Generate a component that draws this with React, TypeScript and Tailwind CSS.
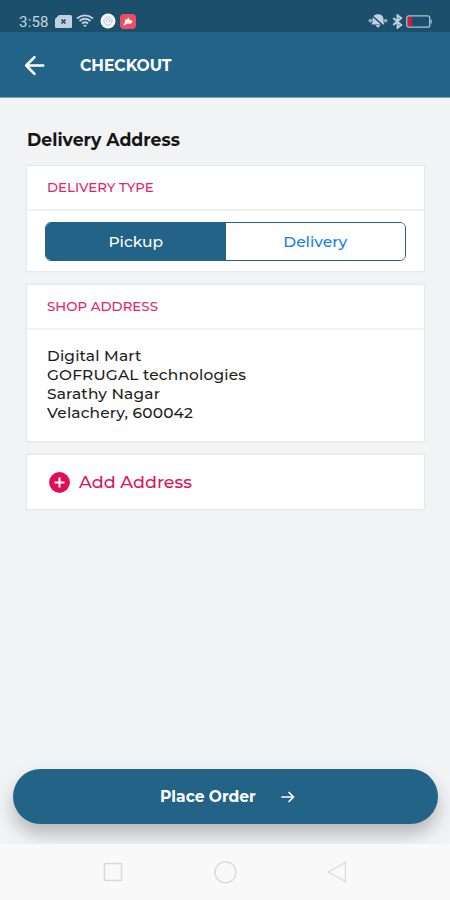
import { useState, type ReactElement, type ReactNode } from 'react';

type DeliveryType = 'pickup' | 'delivery';

const SHOP_ADDRESS = ['Digital Mart', 'GOFRUGAL technologies', 'Sarathy Nagar', 'Velachery, 600042'];

function StatusBar(): ReactElement {
  return (
    <div className="flex h-8 shrink-0 items-center justify-between bg-[#1b4f6c] pt-[10px] pr-[18px] pl-[19px] text-[#c3d6e2]">
      <div className="flex items-center">
        <span className="w-[36px] pt-px font-[Roboto] text-[15px] leading-[20px] tracking-[0.2px] whitespace-nowrap">3:58</span>
        <svg width="17" height="13" viewBox="0 0 17 13">
          <path d="M4 0h11.5Q17 0 17 1.500v10Q17 13 15.500 13h-14Q0 13 0 11.500V4z" fill="#bfd2de" />
          <path d="M6.500 4.500l4 4M10.500 4.500l-4 4" stroke="#1b4f6c" strokeWidth="1.700" />
        </svg>
        <svg width="18" height="14" viewBox="0 0 18 14" className="ml-[4px]" fill="none" stroke="#bfd2de" strokeWidth="1.700">
          <path d="M1 4.500Q9-1.800 17 4.500M3.500 7Q9 2.500 14.500 7M6 9.500q3-2.500 6 0" />
          <path d="M7.500 11.200h3L9 13z" fill="#bfd2de" strokeWidth="0.500" />
        </svg>
        <svg width="16" height="16" viewBox="0 0 16 16" className="ml-[6px]">
          <circle cx="8" cy="8" r="7.500" fill="#f3f7fc" />
          <circle cx="8" cy="8" r="4" fill="none" stroke="#9fb0cf" strokeDasharray="2 1.200" />
          <path d="M6.500 9.500v-2a1.500 1.500 0 0 1 3 0v2" fill="none" stroke="#b3bfdc" />
        </svg>
        <svg width="16" height="15" viewBox="0 0 16 15" className="ml-[4px]">
          <rect width="16" height="15" rx="4" fill="#f14c62" />
          <path d="M3 12l2.200-4.200L4.800 5.500l2.400.3L8 3.300l2 2.600 2.900 1.400-1.900 2.500-3.300-.3z" fill="#fff" />
        </svg>
      </div>
      <div className="flex items-center">
        <svg width="20" height="16" viewBox="0 0 20 16">
          <path d="M10 1.200c3.500 0 5.500 2.300 5.500 5v3l1 2.300h-13l1-2.300v-3c0-2.700 2-5 5.500-5zM7.500 12h5L10 15z" fill="#bfd2de" />
          <path d="M0.500 7.700h3.500M16 7.700h3.500M2.500 6v3.500M17.500 6v3.500" stroke="#9cb7c7" strokeWidth="1.700" />
          <path d="M5 3.500l9.500 8.500" stroke="#1b4f6c" strokeWidth="1.500" />
        </svg>
        <svg width="11" height="15" viewBox="0 0 11 15" className="ml-[4px]" fill="none" stroke="#bfd2de" strokeWidth="1.900">
          <path d="M1.200 4l8 7-3.700 2.800V1.200L9.200 4l-8 7" />
        </svg>
        <svg width="26" height="13" viewBox="0 0 26 13" className="ml-[3px]">
          <rect x="0.800" y="0.800" width="22.900" height="11.400" rx="2" fill="none" stroke="#a9c3d3" strokeWidth="1.300" />
          <rect x="2" y="2" width="4" height="9" fill="#e6142c" />
          <path d="M25 4.500v4" stroke="#a9c3d3" strokeWidth="1.300" />
        </svg>
      </div>
    </div>
  );
}

function Card({ title, children }: { title?: string; children: ReactNode }): ReactElement {
  return (
    <section className="rounded-[2px] border border-[#e7e9e9] bg-white shadow-[0_0_2px_#e5e7e7]">
      {title && (
        <h2 className="flex h-[45px] items-center border-b-2 border-[#f0f1f1] pl-[20px] text-[13.4px] font-medium text-[#e52468]">
          <span>{title}</span>
        </h2>
      )}
      {children}
    </section>
  );
}

function NavigationBar(): ReactElement {
  return (
    <nav className="flex h-14 shrink-0 items-center justify-between bg-[#f9f9f9] px-[102px]">
      <svg width="22" height="22" viewBox="0 0 22 22" fill="none" stroke="#d9d9d9" strokeWidth="1.500">
        <rect x="2.500" y="2.500" width="17" height="17" rx="1" />
      </svg>
      <svg width="24" height="24" viewBox="0 0 24 24" fill="none" stroke="#d9d9d9" strokeWidth="1.300">
        <circle cx="12.500" cy="12.300" r="10.500" />
      </svg>
      <svg width="22" height="24" viewBox="0 0 22 24" fill="none" stroke="#d9d9d9" strokeWidth="1.300" strokeLinejoin="round">
        <path d="M2 12L19.500 2.500V21.500z" />
      </svg>
    </nav>
  );
}

export default function App(): ReactElement {
  const [deliveryType, setDeliveryType] = useState<DeliveryType>('pickup');

  const tabClass = (type: DeliveryType) =>
    deliveryType === type ? 'flex-1 bg-[#226387] text-white' : 'flex-1 bg-white text-[#147cec]';

  return (
    <div className="flex h-[900px] w-[450px] flex-col overflow-hidden bg-[#f2f3f5] font-[Montserrat,Inter,sans-serif]">
      <StatusBar />
      <header className="flex h-[66px] shrink-0 items-center border-b border-[#7da1b8] bg-[#226387] pl-[24px] text-white">
        <button type="button" aria-label="Back">
          <svg width="22" height="22" viewBox="0 0 22 22" fill="none" stroke="currentColor" strokeWidth="2.600" strokeLinecap="round" strokeLinejoin="round">
            <path d="M19.200 11.500H2.500M10.500 3.200L2.200 11.500l8.300 8.300" />
          </svg>
        </button>
        <h1 className="ml-[34px] pt-[2px] text-[15.6px] leading-5 font-bold">CHECKOUT</h1>
      </header>

      <main className="flex flex-1 flex-col pt-[31px] pr-[25px] pl-[26px]">
        <p className="mb-[14px] pl-px text-[17.3px] leading-[22px] font-bold text-[#161616]">Delivery Address</p>
        <div className="flex flex-col gap-3">
          <Card title="DELIVERY TYPE">
            <div className="px-[18px] pt-[11px] pb-[10px]">
              <div className="flex h-[39px] overflow-hidden rounded-[6px] border-[1.500px] border-[#226387] text-[15.500px] font-medium">
                <button type="button" className={tabClass('pickup')} onClick={() => setDeliveryType('pickup')}>
                  Pickup
                </button>
                <button type="button" className={tabClass('delivery')} onClick={() => setDeliveryType('delivery')}>
                  Delivery
                </button>
              </div>
            </div>
          </Card>

          <Card title="SHOP ADDRESS">
            <address className="flex h-[111px] flex-col items-start pt-[16px] pl-[20px] text-[15.4px] leading-[19px] font-medium tracking-[0.18px] text-[#1c1c1c] not-italic">
              {SHOP_ADDRESS.map((line) => (
                <span key={line}>{line}</span>
              ))}
            </address>
          </Card>

          <Card>
            <button type="button" className="flex h-[54px] w-full items-center pl-[22px] text-[17.500px] font-medium text-[#e0145c]">
              <svg width="21" height="21" viewBox="0 0 21 21">
                <circle cx="10.500" cy="10.500" r="10.400" fill="#e00d58" />
                <path d="M10.500 5.500v10M5.500 10.500h10" stroke="#fff" strokeWidth="2" />
              </svg>
              <span className="ml-[9px]">Add Address</span>
            </button>
          </Card>
        </div>
      </main>

      <div className="shrink-0 pr-[12px] pb-5 pl-[13px]">
        <button
          type="button"
          className="flex h-[55px] w-full items-center rounded-full bg-[#226387] pt-px pl-[147px] text-[15.500px] font-bold text-white shadow-[0_10px_18px_rgba(0,0,0,0.25)]"
        >
          <span>Place Order</span>
          <svg width="14" height="12" viewBox="0 0 14 12" className="ml-[25px]" fill="none" stroke="currentColor" strokeWidth="1.700" strokeLinecap="round" strokeLinejoin="round">
            <path d="M1 6h11.500M8 1.500L12.500 6 8 10.500" />
          </svg>
        </button>
      </div>
      <div className="relative z-10">
        <NavigationBar />
      </div>
    </div>
  );
}
